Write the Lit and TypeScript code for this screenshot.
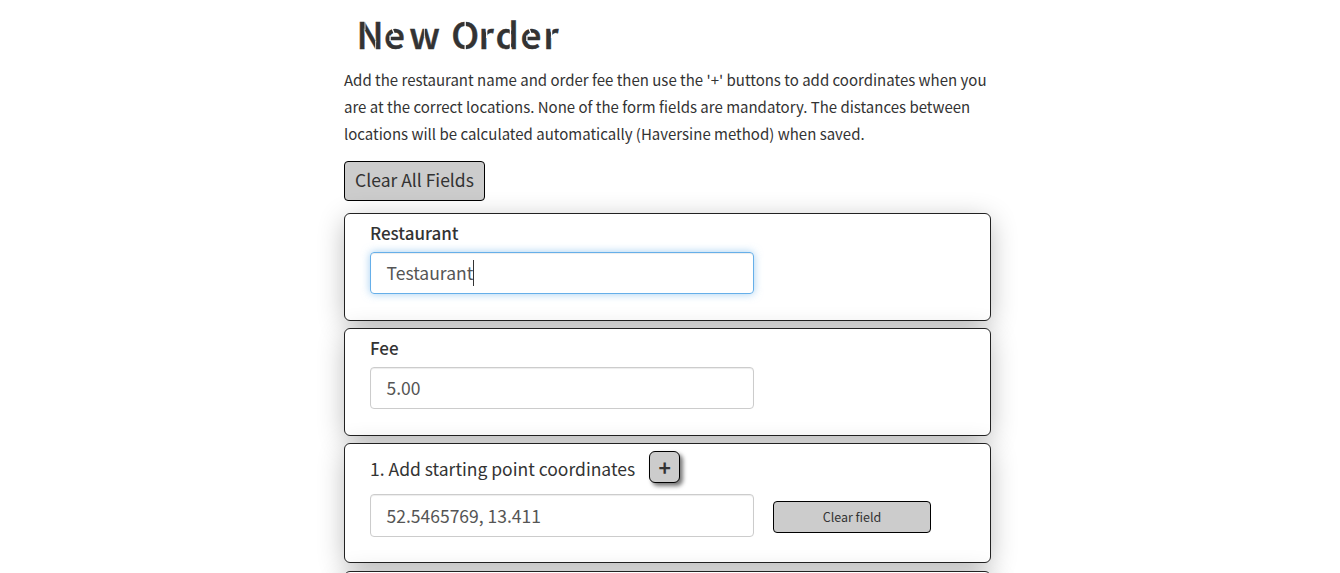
import { LitElement, html, css } from "lit";
import { customElement } from "lit/decorators.js";

@customElement("app-root")
export class AppRoot extends LitElement {
  static styles = css`
    :host { display: block; height: 573px; overflow: hidden; background: #fff; color: #333; font-family: "Noto Sans CJK SC", "Open Sans", sans-serif; font-size: 17.5px; }
    * { box-sizing: border-box; }
    .page { width: 647px; margin-left: 344px; padding-top: 13px; }
    h1 { margin: 0 0 8px 14px; height: 45px; }
    h1 svg { display: block; overflow: visible; }
    h1 text { font-size: 37px; font-weight: 500; fill: #333; stroke: #333; stroke-width: .5; }
    h1 path { stroke: #fff; stroke-width: 1.3; fill: none; }
    h1 .fine { stroke-width: .8; }
    p { margin: 0 0 14px; line-height: 27px; font-size: 15px; white-space: nowrap; }
    button { font-family: inherit; color: #333; background: #ccc; border: 1px solid #000; border-radius: 4px; padding: 0; display: block; white-space: nowrap; }
    .all { width: 141px; height: 40px; font-size: 17.5px; margin-bottom: 12px; padding-bottom: 2px; line-height: 36px; }
    .card { height: 108px; margin-bottom: 7px; padding: 6px 25px 0; background: #fff; border: 1px solid #222; border-radius: 6px; box-shadow: 0 6px 28px -2px rgba(0,0,0,.3); }
    .label { display: block; height: 26px; line-height: 26px; margin-bottom: 6px; font-size: 17px; font-weight: 500; }
    .field { width: 384px; height: 42px; line-height: 40px; padding: 0 15.5px; display: flex; align-items: center; border: 1px solid #ccc; border-radius: 4px; box-shadow: inset 0 1px 1px rgba(0,0,0,.075); color: #555; }
    .focus { border-color: #66afe9; box-shadow: inset 0 1px 1px rgba(0,0,0,.075), 0 0 8px rgba(102,175,233,.6); }
    .caret { width: 1px; height: 26px; background: #333; }
    .coords { height: 120px; margin-bottom: 8px; padding-top: 7px; }
    .row { display: flex; align-items: center; }
    .title { height: 32px; gap: 14px; margin-bottom: 11px; align-items: flex-start; }
    .title span { line-height: 26px; padding-top: 5px; }
    .plus { width: 31px; height: 32px; border-radius: 6px; font-size: 21px; font-weight: 700; line-height: 30px; box-shadow: 3px 3px 4px #777; }
    .gap { gap: 19px; }
    .tall { height: 43px; }
    .small { width: 158px; height: 32px; font-size: 12.5px; margin-top: 3px; line-height: 30px; }
  `;

  render() {
    return html`
      <div class="page">
        <h1>
          <svg width="210" height="45" viewBox="0 0 210 45">
            <text y="35.6" x="-1.4 25.9 51.2 80 93.3 120.5 137.4 162.5 185.2">New Order</text>
            <path class="fine" d="M7 8V17M17.6 28V37M66.4 14V24" />
            <path d="M107.2 7V38M128.7 14V25M152.4 14V38M193.6 14V25" />
            <path d="M32.1 22.5V28M168.9 22.5V28M33.5 14L36 20M170.3 14L172.8 20" />
          </svg>
        </h1>
        <p><span>Add the restaurant name and order fee then use the '+' buttons to add coordinates when you</span><br />
          <span>are at the correct locations. None of the form fields are mandatory. The distances between</span><br />
          <span>locations will be calculated automatically (Haversine method) when saved.</span></p>
        <button class="all">Clear All Fields</button>
        <section class="card">
          <span class="label">Restaurant</span>
          <div class="field focus"><span>Testaurant</span><i class="caret"></i></div>
        </section>
        <section class="card">
          <span class="label">Fee</span>
          <div class="field"><span>5.00</span></div>
        </section>
        <section class="card coords">
          <div class="row title"><span>1. Add starting point coordinates</span><button class="plus">+</button></div>
          <div class="row gap"><div class="field tall"><span>52.5465769, 13.411</span></div><button class="small">Clear field</button></div>
        </section>
        <section class="card coords"></section>
      </div>`;
  }
}
